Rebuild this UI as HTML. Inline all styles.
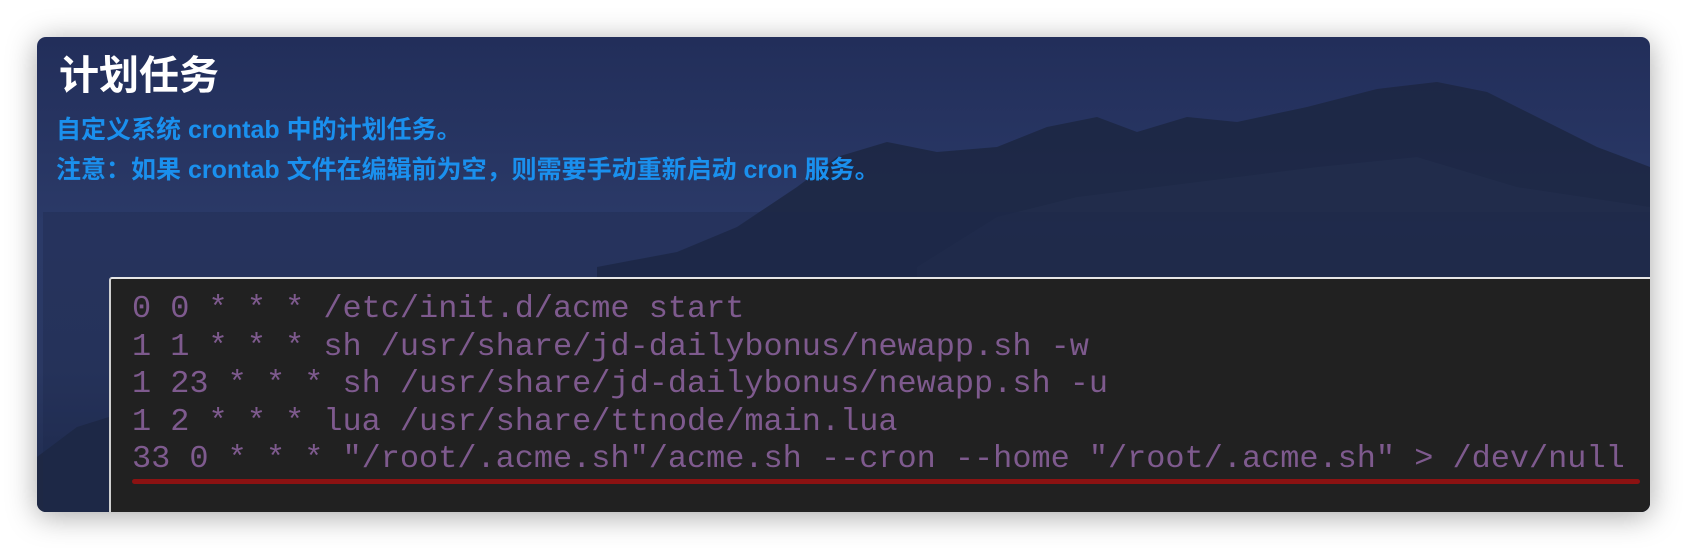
<!DOCTYPE html>
<html><head><meta charset="utf-8"><style>
html,body{margin:0;padding:0;width:1686px;height:548px;background:#fff;overflow:hidden}
.card{position:absolute;left:37px;top:37px;width:1613px;height:475px;border-radius:9px;overflow:hidden;
background:linear-gradient(180deg,#222e5a 0%,#2b3a68 40%,#2a3862 70%,#1e2a4c 100%);box-shadow:0 4px 30px rgba(0,0,0,.35)}
svg.bg{position:absolute;left:0;top:0}
.t{position:absolute;left:22px;top:6px;color:#fff;font:bold 40px "Liberation Sans","Noto Sans CJK SC",sans-serif}
.d{position:absolute;left:19px;color:#1a90ee;font:bold 25px "Liberation Sans","Noto Sans CJK SC",sans-serif;white-space:nowrap}
.band{position:absolute;left:6px;top:175px;right:0;bottom:0;background:rgba(30,40,75,.35)}
.ed{position:absolute;left:72px;top:240px;right:0;bottom:0;background:#212121;border-top:2px solid #e6e6e6;border-left:2px solid #cfcfcf;border-top-left-radius:3px}
.code{position:absolute;left:21px;top:11px;font:31.9px "Liberation Mono",monospace;color:#7e5a8e;line-height:37.6px;white-space:pre}
.ul{position:absolute;left:21px;top:200px;width:1508px;height:5px;background:#8b1212;border-radius:3px}
</style></head><body>
<div class="card">
<svg class="bg" width="1613" height="475" viewBox="0 0 1613 475">
<polygon fill="#1b2540" opacity=".8" points="560,230 640,215 700,190 760,150 800,120 850,105 900,115 960,110 1010,90 1060,80 1100,95 1150,80 1200,85 1270,70 1340,52 1400,45 1450,55 1500,80 1560,110 1613,130 1613,475 560,475"/>
<polygon fill="#243050" opacity=".5" points="880,230 960,180 1040,160 1120,150 1200,140 1280,130 1380,120 1480,150 1613,170 1613,475 880,475"/>
<polygon fill="#1e2844" points="0,420 40,390 72,380 72,475 0,475"/>
</svg>
<div class="band"></div>
<div class="t">计划任务</div>
<div class="d" style="top:73px">自定义系统 crontab 中的计划任务。</div>
<div class="d" style="top:113px">注意：如果 crontab 文件在编辑前为空，则需要手动重新启动 cron 服务。</div>
<div class="ed"><div class="code">0 0 * * * /etc/init.d/acme start
1 1 * * * sh /usr/share/jd-dailybonus/newapp.sh -w
1 23 * * * sh /usr/share/jd-dailybonus/newapp.sh -u
1 2 * * * lua /usr/share/ttnode/main.lua
33 0 * * * "/root/.acme.sh"/acme.sh --cron --home "/root/.acme.sh" &gt; /dev/null</div><div class="ul"></div></div>
</div>
</body></html>
